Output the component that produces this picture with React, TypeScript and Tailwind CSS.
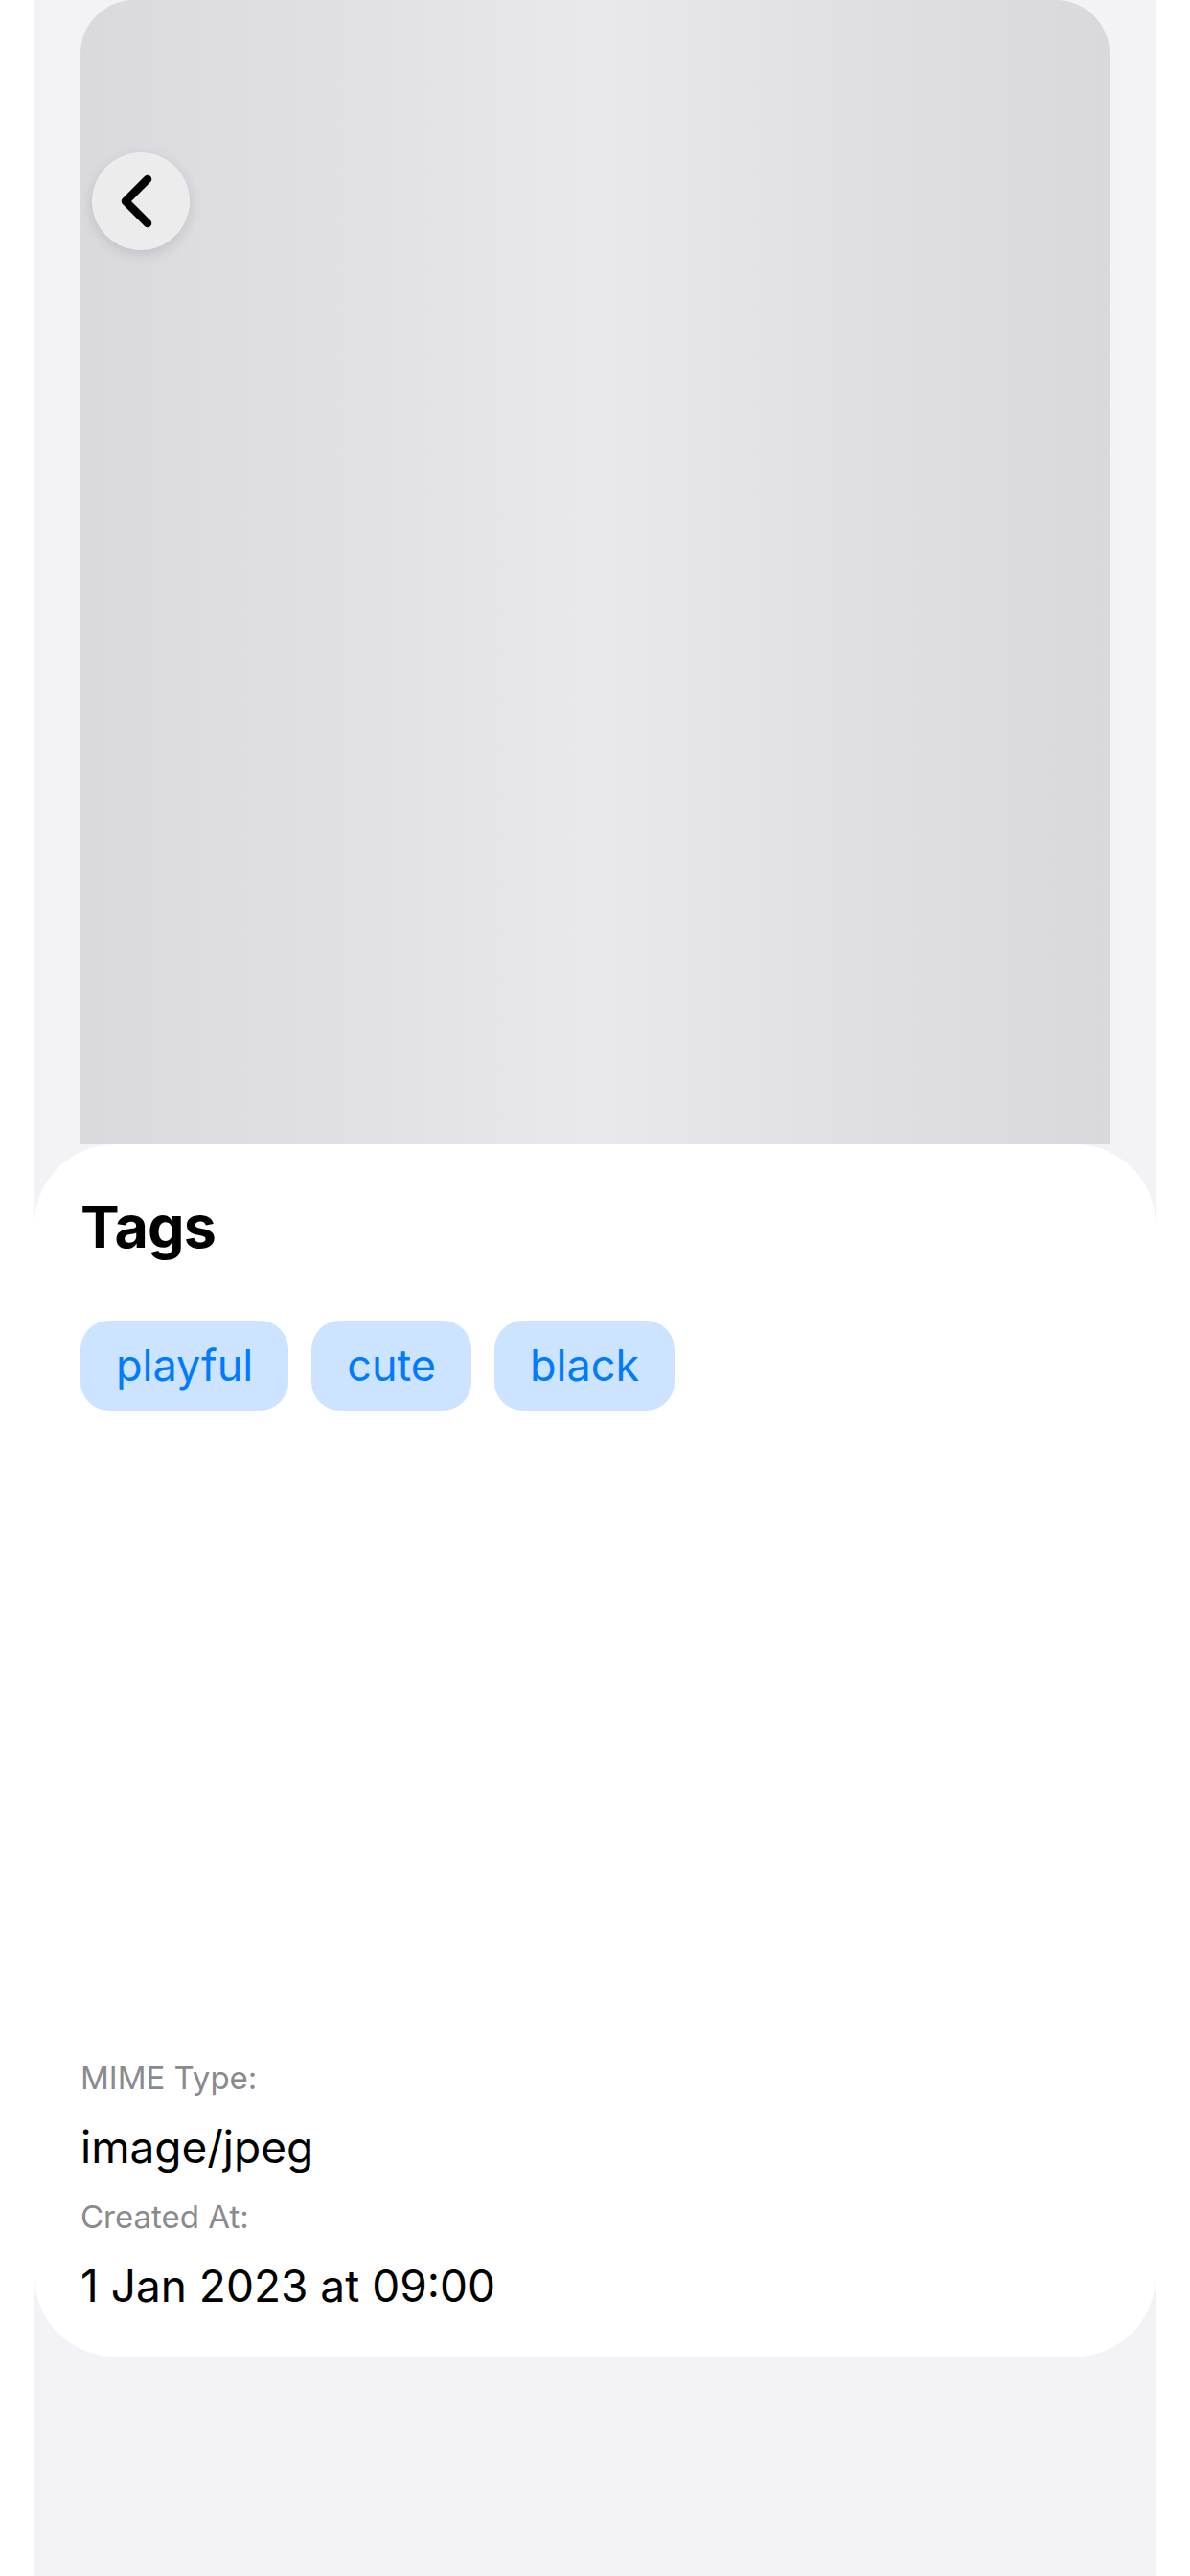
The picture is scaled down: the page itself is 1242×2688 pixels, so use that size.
const tags = ["playful", "cute", "black"];

function BackButton() {
  return (
    <button className="absolute left-[12px] top-[159px] flex h-[102px] w-[102px] items-center justify-center rounded-full bg-[#ececec] shadow-[0_4px_14px_rgba(0,0,0,0.12)]">
      <svg width="102" height="102" viewBox="0 0 102 102" fill="none">
        <path
          d="M58 28 L35 51 L58 74"
          stroke="#000"
          strokeWidth="8.5"
          strokeLinecap="round"
          strokeLinejoin="round"
        />
      </svg>
    </button>
  );
}

function InfoRow({ label, value }: { label: string; value: string }) {
  return (
    <div className="flex flex-col">
      <span className="text-[33px] leading-[44px] text-[#8a8a8e]">{label}</span>
      <span className="mt-[19px] text-[46px] leading-[62px] text-black">{value}</span>
    </div>
  );
}

export default function App() {
  return (
    <div
      className="min-h-[2688px] w-full bg-white"
      style={{ fontFamily: "Inter, 'Noto Sans', sans-serif" }}
    >
      <div className="mx-[36px] flex min-h-[2688px] flex-col bg-[#f2f2f7]">
        <div className="px-[48px]">
          <div className="relative h-[1194px] rounded-t-[56px] bg-[linear-gradient(90deg,#d9d9de_0%,#e2e2e6_30%,#e9e9ed_50%,#e0e0e4_75%,#d9d8dd_100%)]">
            <BackButton />
          </div>
        </div>

        <div className="flex h-[1265px] flex-col rounded-[84px] bg-white px-[48px] pb-[43px] pt-[48px]">
          <h2 className="text-[61px] font-bold leading-[76px] tracking-[-0.8px] text-black">
            Tags
          </h2>
          <div className="mt-[60px] flex gap-[24px]">
            {tags.map((t) => (
              <span
                key={t}
                className="flex h-[94px] items-center rounded-[30px] bg-[#cce4ff] px-[37px] text-[45px] text-[#007aff]"
              >
                {t}
              </span>
            ))}
          </div>

          <div className="mt-auto flex flex-col">
            <InfoRow label="MIME Type:" value="image/jpeg" />
            <div className="mt-[20px]">
              <InfoRow label="Created At:" value="1 Jan 2023 at 09:00" />
            </div>
          </div>
        </div>
      </div>
    </div>
  );
}
